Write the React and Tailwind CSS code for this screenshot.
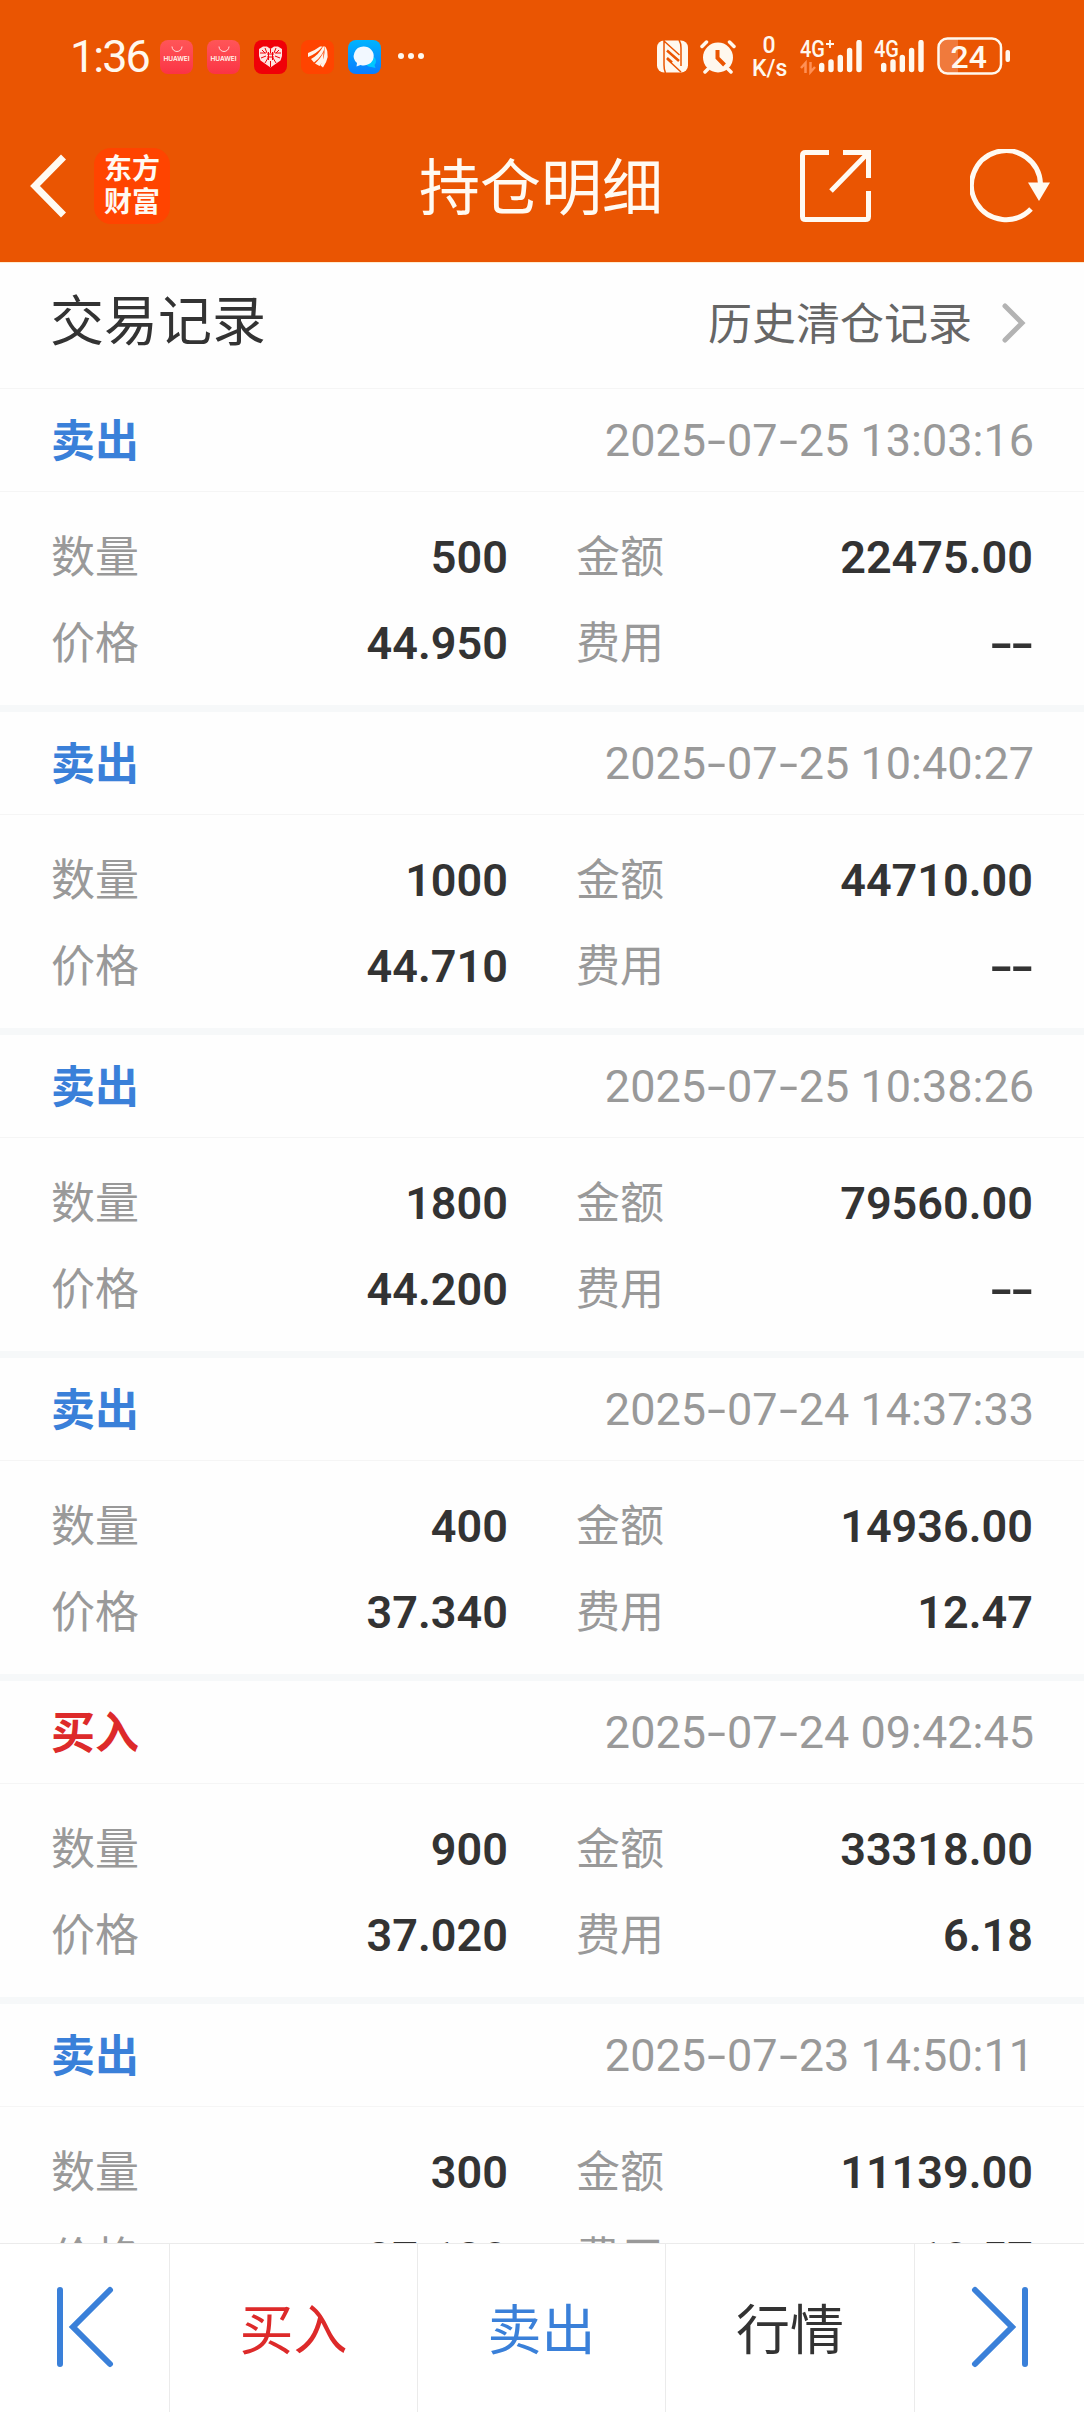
import clsx from "clsx";

const records = [
  { side: "卖出", time: "2025-07-25 13:03:16", qty: "500", amount: "22475.00", price: "44.950", fee: "--" },
  { side: "卖出", time: "2025-07-25 10:40:27", qty: "1000", amount: "44710.00", price: "44.710", fee: "--" },
  { side: "卖出", time: "2025-07-25 10:38:26", qty: "1800", amount: "79560.00", price: "44.200", fee: "--" },
  { side: "卖出", time: "2025-07-24 14:37:33", qty: "400", amount: "14936.00", price: "37.340", fee: "12.47" },
  { side: "买入", time: "2025-07-24 09:42:45", qty: "900", amount: "33318.00", price: "37.020", fee: "6.18" },
  { side: "卖出", time: "2025-07-23 14:50:11", qty: "300", amount: "11139.00", price: "37.130", fee: "10.57" },
];

const HuaweiIcon = () => (
  <div className="flex flex-col items-center w-[33px] h-[34px] mr-[14px] rounded-[8px] bg-gradient-to-b from-[#ff5558] to-[#fb3345]">
    <svg className="w-[12px] h-[7px] mt-[6px]" viewBox="0 0 12 7" fill="none" stroke="#ffd9d9">
      <path d="M1 0.500a5 5 0 0 0 10 0" />
    </svg>
    <span className="text-[6.5px] leading-[8px] mt-[2px] font-semibold font-['Inter',sans-serif]">
      HUAWEI
    </span>
  </div>
);

const HeartIcon = () => (
  <svg className="w-[33px] h-[34px] mr-[14px]" viewBox="0 0 33 34">
    <rect width="33" height="34" rx="8" fill="#f00008" />
    <path d="M16.500 27.500L6.500 20.500L5 16V9L9 6.500H13L16.500 9L20 6.500H24L28 9V16L26.500 20.500Z" fill="#ffe4e0" />
    <path
      d="M16.500 9v4M11 8l2 5M22 8l-2 5M6 13h6M21 13h6M7 18l5-2M26 18l-5-2M11 23l3-5M22 23l-3-5M16.500 21v6M8 10l3 3M25 10l-3 3M13 14h7M13 17h7M14.500 12v8M18.500 12v8"
      stroke="#f00008"
      strokeWidth="1"
    />
  </svg>
);

const EastMoneyIcon = () => (
  <svg className="w-[33px] h-[34px] mr-[14px]" viewBox="0 0 33 34">
    <rect width="33" height="34" rx="8" fill="#ff4400" />
    <g fill="#fff3ea">
      <path d="M7 13Q13 11 19 6.500H21.500Q16 13.500 7 17Z" />
      <path d="M10 19Q18 14.500 22 6.500L24 6.500Q22 16 13 22.500Z" />
      <path d="M14 23.500Q20 18 22.500 12L22 22L18.500 26Z" />
      <path d="M24.500 6.500Q30 16 22 27.500L19.500 25.500Q24 17 23.500 9Z" />
    </g>
  </svg>
);

const ChatIcon = () => (
  <svg className="w-[33px] h-[34px] mr-[17px]" viewBox="0 0 33 34">
    <defs>
      <linearGradient id="chat" x1="0" y1="0" x2="0" y2="1">
        <stop offset="0" stopColor="#00b4ff" />
        <stop offset="1" stopColor="#0a7cff" />
      </linearGradient>
    </defs>
    <rect width="33" height="34" rx="8" fill="url(#chat)" />
    <path d="M26 17a5.500 5.500 0 0 1 .5 8l1 3-4-1a6 6 0 0 1-5-2Z" fill="#00c8ff" />
    <path d="M15.500 6.500a10 9.500 0 1 1-3 18.500l-4 1.500 .5-3.500A10 9.500 0 0 1 15.500 6.500Z" fill="#f2f8ff" />
  </svg>
);

const NfcIcon = () => (
  <svg className="w-[31px] h-[33px] mr-[12px]" viewBox="0 0 31 33">
    <rect y="0.500" width="31" height="32" rx="7" fill="#fff8ee" />
    <g fill="none" stroke="#ea5502">
      <path d="M8.500 33Q7 30 7 25V0M7 1L22.500 15M22 0Q24 3 24 8V26M10 19L24 32" strokeWidth="1.500" />
      <path d="M10 10.500L22 21M10 18L15 22.500" strokeWidth="2.500" />
    </g>
  </svg>
);

const AlarmIcon = () => (
  <svg className="w-[36px] h-[35px] mr-[16px]" viewBox="0 0 36 35" fill="none" stroke="#fff8ee" strokeLinecap="round">
    <circle cx="18" cy="17.500" r="15" fill="#fff8ee" stroke="none" />
    <path d="M2 6.500L6.500 2M34 6.500L29.500 2M8 29L5 32M28 29L31 32" strokeWidth="3.500" />
    <path d="M17.500 10V18L24.500 25" stroke="#ea5502" strokeWidth="4" strokeLinecap="butt" />
  </svg>
);

const Signal = ({ label, plus }) => (
  <svg className={plus ? "w-[63px] h-[37px] mr-[11px]" : "w-[51px] h-[37px] mr-[12px]"} viewBox={plus ? "0 0 63 37" : "12 0 51 37"}>
    <text x={plus ? 0 : 12} y="16.500" fontSize="24" fontWeight="500" fill="#fff8ee" textLength="25" lengthAdjust="spacingAndGlyphs" fontFamily="Roboto, sans-serif">
      {label}
    </text>
    {plus && (
      <>
        <path d="M26 4h8M30 0v8" stroke="#fff8ee" strokeWidth="1.800" />
        <path d="M1 28L5.500 23V33M15 27L10.500 32V22" fill="none" stroke="#ff9055" strokeWidth="2.500" />
      </>
    )}
    <g stroke="#fff8ee" strokeWidth="5.400" strokeLinecap="round">
      <path d="M21.700 25.500V29.500M31 22V29.500M40.300 17.500V29.500M49.600 10.500V29.500M59 2.500V29.500" />
    </g>
  </svg>
);

const StatusBar = () => (
  <div className="flex items-start h-[111px] pt-[40px] pl-[70px] text-[#fff8ee]">
    <div className="w-[90px] -mt-[6px] text-[45px] leading-[46px] tracking-[-2px] font-['Roboto',sans-serif]">1:36</div>
    <HuaweiIcon />
    <HuaweiIcon />
    <HeartIcon />
    <EastMoneyIcon />
    <ChatIcon />
    <div className="flex gap-[4px] mt-[13px] mr-auto">
      <span className="w-[6px] h-[6px] rounded-full bg-[#fff8ee]" />
      <span className="w-[6px] h-[6px] rounded-full bg-[#fff8ee]" />
      <span className="w-[6px] h-[6px] rounded-full bg-[#fff8ee]" />
    </div>
    <NfcIcon />
    <AlarmIcon />
    <div className="w-[34px] mr-[14px] -mt-[6px] text-center text-[23px] leading-[23px] font-medium font-['Roboto',sans-serif]">
      <div>0</div>
      <div>K/s</div>
    </div>
    <Signal label="4G" plus />
    <Signal label="4G" />
    <svg className="w-[74px] h-[38px] -mt-[3px] mr-[73px]" viewBox="0 0 74 38">
      <path d="M10 1.500H21V36.500H10A8.500 8.500 0 0 1 1.500 28V10A8.500 8.500 0 0 1 10 1.500Z" fill="#f07a3c" />
      <rect x="1.500" y="1.500" width="62.500" height="35" rx="9" fill="none" stroke="#fff8ee" strokeWidth="2.500" />
      <rect x="68.500" y="13" width="4.500" height="12" rx="2" fill="#fff8ee" />
      <text x="13.500" y="30.500" fontSize="32" fontWeight="500" fill="#fff8ee" fontFamily="Roboto, sans-serif">
        24
      </text>
    </svg>
  </div>
);

const TitleBar = () => (
  <div className="flex items-start h-[151px] text-[#fffaf2]">
    <svg className="w-[36px] h-[64px] ml-[30px] mt-[43px]" viewBox="0 0 36 64" fill="none" stroke="currentColor" strokeWidth="7">
      <path d="M33.500 3L5 32L33.500 61" />
    </svg>
    <div className="w-[76px] h-[76px] ml-[28px] mt-[37px] pt-[3px] rounded-[17px] bg-[#ff4400] text-center text-[28px] leading-[33px] font-bold font-['Noto_Sans_CJK_SC',sans-serif]">
      <div>东方</div>
      <div>财富</div>
    </div>
    <h1 className="w-[245px] ml-[249px] mt-[35px] text-[61px] leading-[76px] whitespace-nowrap font-['Noto_Sans_CJK_SC',sans-serif]">
      持仓明细
    </h1>
    <svg className="w-[71px] h-[72px] ml-[136px] mt-[39px]" viewBox="0 0 71 72" fill="none" stroke="currentColor" strokeWidth="5">
      <path d="M29 2.500H5.500Q2.500 2.500 2.500 5.500V66.500Q2.500 69.500 5.500 69.500H65.500Q68.500 69.500 68.500 66.500V41" />
      <path d="M43 2.500H68.500V28M68 3L31 41" />
    </svg>
    <svg className="w-[82px] h-[74px] ml-[99px] mt-[38px]" viewBox="0 0 82 74" fill="none" stroke="currentColor" strokeWidth="5">
      <path d="M70.500 35A34.500 34.500 0 1 0 61 60" />
      <path d="M58 33.500H80L69 52Z" fill="currentColor" stroke="none" />
    </svg>
  </div>
);

// numbers with the hyphens widened to the figure dash of the app font
const Digits = ({ text }) =>
  text.split("").map((char, i) =>
    char === "-" ? (
      <span key={i} className="inline-block w-[21px] text-center scale-x-[1.5]">
        -
      </span>
    ) : (
      char
    )
  );

const Field = ({ label, value }) => (
  <div className="flex justify-between h-[86px] leading-[64px]">
    <span className="text-[44px] text-[#999999] -mt-px">{label}</span>
    <span className="mt-[3px] text-[45px] font-semibold text-[#333333] font-['Roboto',sans-serif]">
      <Digits text={value} />
    </span>
  </div>
);

const RecordCard = ({ record }) => (
  <div className="h-[323px] shrink-0 border-b-[7px] border-[#f6f8f9]">
    <div className="flex justify-between h-[103px] pt-[17px] pl-[51px] pr-[50px] leading-[64px] border-b border-[#f5f5f5]">
      <span className={clsx("text-[44px] font-bold", record.side === "卖出" ? "text-[#3a80d9]" : "text-[#dd2a2a]")}>
        {record.side}
      </span>
      <span className="mt-[3px] text-[45px] text-[#999999] font-['Roboto',sans-serif]">
        <Digits text={record.time} />
      </span>
    </div>
    <div className="grid grid-cols-[457px_457px] gap-x-[68px] pl-[51px] pt-[31px]">
      <Field label="数量" value={record.qty} />
      <Field label="金额" value={record.amount} />
      <Field label="价格" value={record.price} />
      <Field label="费用" value={record.fee} />
    </div>
  </div>
);

const BottomBar = () => (
  <nav className="flex h-[169px] shrink-0 border-t border-[#ebebeb] bg-white text-[54px] leading-[166px] text-center">
    <div className="w-[170px] border-r border-[#ebebeb]">
      <svg className="w-[58px] h-[82px] ml-[56px] mt-[42px]" viewBox="0 0 58 82" fill="none" stroke="#3a80d9" strokeWidth="6" strokeLinecap="round">
        <path d="M4 4V78M54 4L17 41L54 78" />
      </svg>
    </div>
    <div className="w-[248px] border-r border-[#ebebeb] text-[#dd2a2a]">买入</div>
    <div className="w-[248px] border-r border-[#ebebeb] text-[#3a80d9]">卖出</div>
    <div className="w-[249px] border-r border-[#ebebeb] text-[#333333]">行情</div>
    <div className="flex-1">
      <svg className="w-[58px] h-[82px] ml-[56px] mt-[42px]" viewBox="0 0 58 82" fill="none" stroke="#3a80d9" strokeWidth="6" strokeLinecap="round">
        <path d="M54 4V78M4 4L41 41L4 78" />
      </svg>
    </div>
  </nav>
);

export default function App() {
  return (
    <div className="flex flex-col w-[1084px] h-[2412px] overflow-hidden bg-[#fefefe] font-['Noto_Sans_CJK_SC',sans-serif]">
      <header className="shrink-0 bg-[#ea5502]">
        <StatusBar />
        <TitleBar />
      </header>

      <div className="flex h-[127px] shrink-0 pl-[50px] border-t border-t-[#ffeccf] border-b border-b-[#f5f5f5]">
        <h2 className="mt-[15px] text-[54px] leading-[80px] text-[#333333]">交易记录</h2>
        <span className="ml-auto mt-[18px] text-[44px] leading-[80px] text-[#666666]">历史清仓记录</span>
        <svg className="w-[24px] h-[40px] ml-[30px] mr-[58px] mt-[40px]" viewBox="0 0 24 40" fill="none" stroke="#b3b3b3" strokeWidth="5" strokeLinecap="round">
          <path d="M3 3L20 20L3 37" />
        </svg>
      </div>

      <main className="flex flex-col flex-1 min-h-0 overflow-hidden">
        {records.map((record) => (
          <RecordCard key={record.time} record={record} />
        ))}
      </main>

      <BottomBar />
    </div>
  );
}
